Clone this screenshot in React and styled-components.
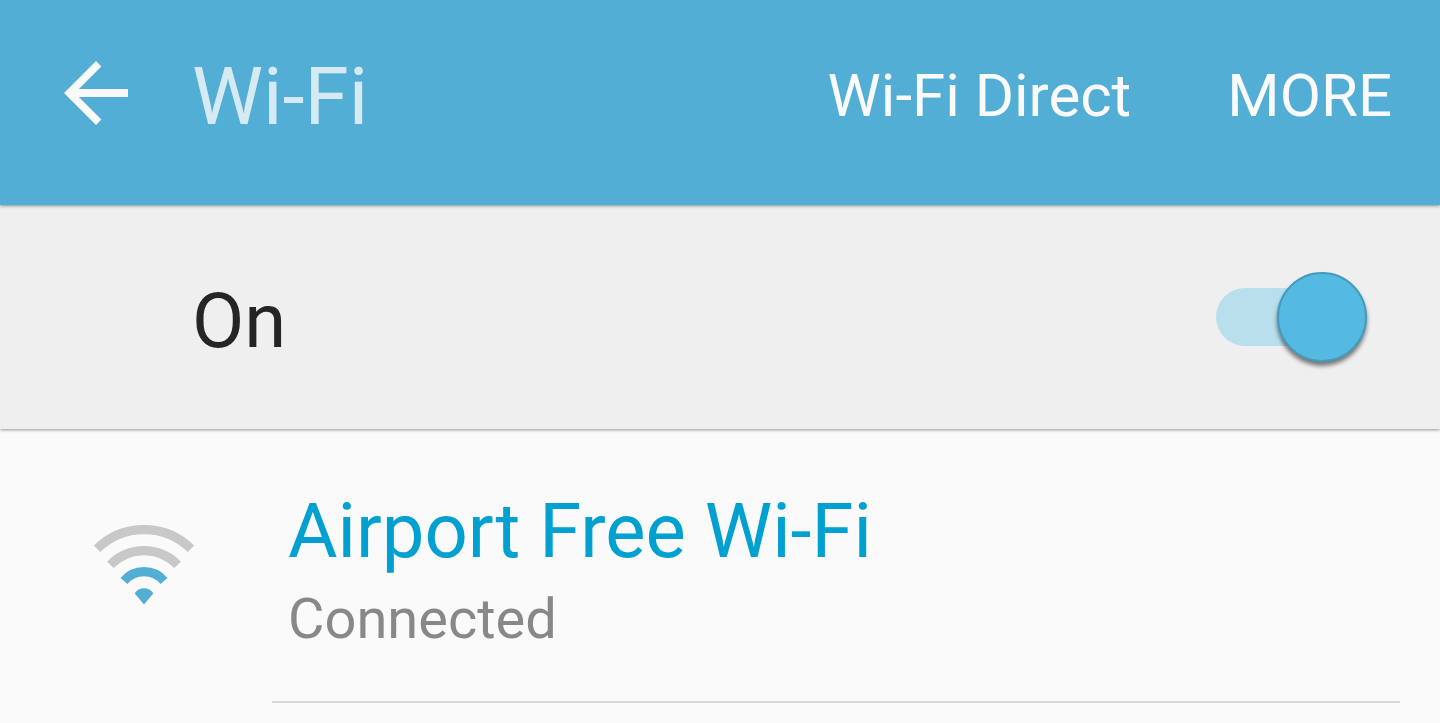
import React, { useState } from "react";
import styled, { createGlobalStyle } from "styled-components";

const GlobalStyle = createGlobalStyle`
  *, *::before, *::after { box-sizing: border-box; }
  body {
    margin: 0;
    background: #fafafa;
    font-family: Roboto, "Liberation Sans", sans-serif;
    -webkit-font-smoothing: antialiased;
  }
`;

const Screen = styled.main`
  min-height: 100vh;
  overflow: hidden;
`;

const AppBar = styled.header`
  display: flex;
  position: relative;
  z-index: 1;
  align-items: center;
  height: 205px;
  padding: 0 48px 20px 64px;
  background: #53aed5;
  box-shadow: 0 1px 3px rgba(0, 0, 0, 0.4);
  color: #fafafa;
`;

const BarButton = styled.button`
  padding: 0;
  border: 0;
  background: none;
  color: inherit;
  font: inherit;
  font-size: 60px;
  line-height: 72px;
  cursor: pointer;
`;

const BackButton = styled(BarButton)`
  display: flex;
  width: 64px;
`;

const Title = styled.h1`
  flex: 1;
  margin: 0 0 0 64px;
  padding-top: 8px;
  color: #d6eaf3;
  font-size: 80px;
  font-weight: 400;
  line-height: 96px;
`;

const Actions = styled.nav`
  display: flex;
  gap: 96px;
  padding-top: 6px;
`;

const SwitchBar = styled.label`
  display: flex;
  position: relative;
  align-items: center;
  justify-content: space-between;
  height: 224px;
  padding: 0 73px 0 192px;
  background: #efefef;
  box-shadow: 0 1px 3px rgba(0, 0, 0, 0.4);
  color: #252525;
  cursor: pointer;
`;

const SwitchText = styled.span`
  padding-top: 8px;
  font-size: 76px;
  line-height: 88px;
`;

const Switch = styled.input`
  appearance: none;
  display: flex;
  align-items: center;
  width: 151px;
  height: 58px;
  margin: 0;
  border-radius: 29px;
  background: #b9dfed;
  cursor: pointer;

  &::before {
    content: "";
    width: 90px;
    height: 90px;
    margin-left: auto;
    border: 2px solid #439cbd;
    border-radius: 50%;
    background: #54bae1;
    box-shadow: 0 4px 4px rgba(0, 0, 0, 0.5);
  }

  &:not(:checked)::before { margin-left: 0; }
`;

const NetworkList = styled.ul`
  margin: 0;
  padding: 0 40px 0 0;
  list-style: none;
`;

const Network = styled.li`
  display: flex;
  align-items: center;
`;

const SignalIcon = styled.svg`
  flex: none;
  width: 100px;
  height: 82px;
  margin: 0 78px 0 94px;
`;

const NetworkText = styled.div`
  flex: 1;
  padding: 56px 16px 40px;
  border-bottom: 2px solid #d9d9d9;
`;

const NetworkName = styled.div`
  color: #00a0d0;
  font-size: 76px;
  line-height: 92px;
`;

const NetworkStatus = styled.div`
  color: #868889;
  font-size: 56px;
  line-height: 84px;
`;

export default function App() {
  const [on, setOn] = useState(true);
  return (
    <Screen>
      <GlobalStyle />
      <AppBar>
        <BackButton type="button" aria-label="Back">
          <svg width="64" height="64" viewBox="0 0 64 64" fill="none" stroke="currentColor">
            <path d="M34.7 2.7 L5.4 32 L34.7 61.3" strokeWidth="7.6" />
            <path d="M8 32 H64" strokeWidth="8" />
          </svg>
        </BackButton>
        <Title>Wi-Fi</Title>
        <Actions>
          <BarButton type="button">Wi-Fi Direct</BarButton>
          <BarButton type="button">MORE</BarButton>
        </Actions>
      </AppBar>
      <SwitchBar>
        <SwitchText>{on ? "On" : "Off"}</SwitchText>
        <Switch type="checkbox" role="switch" checked={on} onChange={(e) => setOn(e.target.checked)} />
      </SwitchBar>
      <NetworkList>
        <Network>
          <SignalIcon viewBox="0 0 100 82" fill="none" strokeWidth="9.2" aria-hidden="true">
            <path d="M3 23.8 A67 67 0 0 1 97 23.8" stroke="#c8c8c8" />
            <path d="M16.4 39.9 A46.9 46.9 0 0 1 83.6 39.9" stroke="#c8c8c8" />
            <path d="M30 56 A26.2 26.2 0 0 1 70 56" stroke="#53aed5" />
            <path d="M40.7 68.5 A10.8 10.8 0 0 1 59.3 68.5 L50 79.5 Z" fill="#53aed5" />
          </SignalIcon>
          <NetworkText>
            <NetworkName>Airport Free Wi-Fi</NetworkName>
            <NetworkStatus>Connected</NetworkStatus>
          </NetworkText>
        </Network>
      </NetworkList>
    </Screen>
  );
}
